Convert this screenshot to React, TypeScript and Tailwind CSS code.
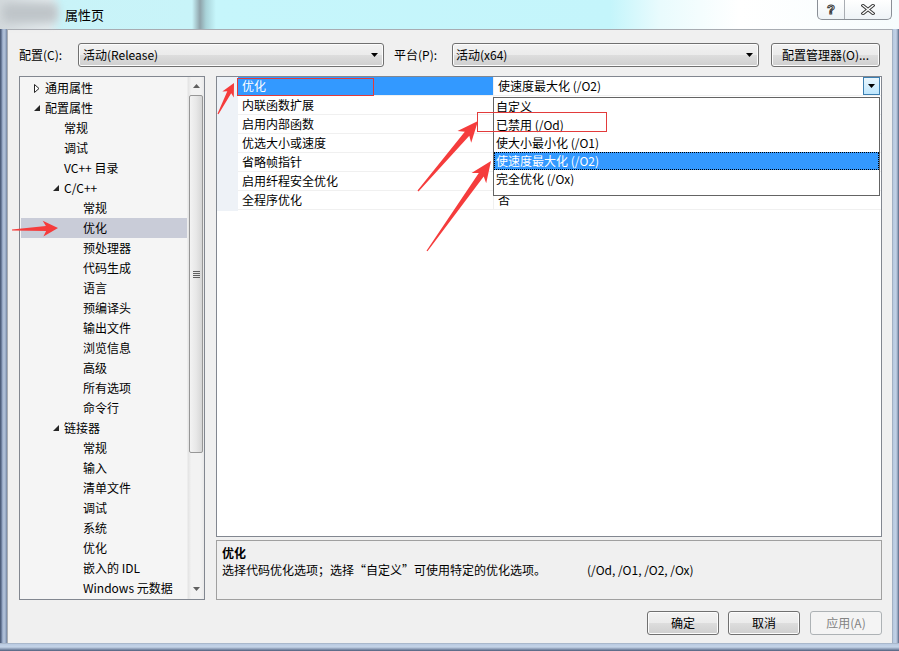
import React from "react";

type Node = { t: string; l: number; e?: "open" | "closed"; sel?: boolean };

const tree: Node[] = [
  { t: "通用属性", l: 0, e: "closed" },
  { t: "配置属性", l: 0, e: "open" },
  { t: "常规", l: 1 },
  { t: "调试", l: 1 },
  { t: "VC++ 目录", l: 1 },
  { t: "C/C++", l: 1, e: "open" },
  { t: "常规", l: 2 },
  { t: "优化", l: 2, sel: true },
  { t: "预处理器", l: 2 },
  { t: "代码生成", l: 2 },
  { t: "语言", l: 2 },
  { t: "预编译头", l: 2 },
  { t: "输出文件", l: 2 },
  { t: "浏览信息", l: 2 },
  { t: "高级", l: 2 },
  { t: "所有选项", l: 2 },
  { t: "命令行", l: 2 },
  { t: "链接器", l: 1, e: "open" },
  { t: "常规", l: 2 },
  { t: "输入", l: 2 },
  { t: "清单文件", l: 2 },
  { t: "调试", l: 2 },
  { t: "系统", l: 2 },
  { t: "优化", l: 2 },
  { t: "嵌入的 IDL", l: 2 },
  { t: "Windows 元数据", l: 2 },
];

const indent: Record<number, string> = { 0: "pl-[9px]", 1: "pl-[28px]", 2: "pl-[47px]" };

// values of rows 1-5 sit under the open list, so they are left empty
const props = [
  ["优化", "使速度最大化 (/O2)"],
  ["内联函数扩展", ""],
  ["启用内部函数", ""],
  ["优选大小或速度", ""],
  ["省略帧指针", ""],
  ["启用纤程安全优化", ""],
  ["全程序优化", "否"],
];

const options = ["自定义", "已禁用 (/Od)", "使大小最小化 (/O1)", "使速度最大化 (/O2)", "完全优化 (/Ox)"];

const winBtn =
  "h-[24px] rounded-[3px] border border-[#707070] bg-[linear-gradient(#f2f2f2_0%,#ebebeb_50%,#dddddd_51%,#cfcfcf_100%)] shadow-[inset_0_0_0_1px_#fcfcfc]";

function Caret() {
  return (
    <svg width="7" height="4" viewBox="0 0 7 4">
      <path d="M0 0h7L3.5 4z" fill="#000" />
    </svg>
  );
}

function Expander({ kind }: { kind?: "open" | "closed" }) {
  return (
    <div className="w-[16px] h-[20px] flex items-center justify-center">
      {kind === "closed" && (
        <svg width="6" height="9" viewBox="0 0 6 9">
          <path d="M0.5 0.5L5 4.5L0.5 8.5Z" fill="#fff" stroke="#262626" strokeWidth="1" />
        </svg>
      )}
      {kind === "open" && (
        <svg width="6" height="6" viewBox="0 0 6 6">
          <path d="M6 0V6H0Z" fill="#262626" />
        </svg>
      )}
    </div>
  );
}

function arrow(tx: number, ty: number, hx: number, hy: number, hl: number, hw: number, s0: number, s1: number) {
  const dx = hx - tx;
  const dy = hy - ty;
  const L = Math.hypot(dx, dy);
  const ux = dx / L;
  const uy = dy / L;
  const nx = -uy;
  const ny = ux;
  const bx = hx - ux * hl;
  const by = hy - uy * hl;
  const cx = hx - ux * hl * 0.8;
  const cy = hy - uy * hl * 0.8;
  const p = [
    [tx + nx * s0, ty + ny * s0],
    [cx + nx * s1, cy + ny * s1],
    [bx + nx * hw, by + ny * hw],
    [hx, hy],
    [bx - nx * hw, by - ny * hw],
    [cx - nx * s1, cy - ny * s1],
    [tx - nx * s0, ty - ny * s0],
  ];
  return p.map((q) => q[0].toFixed(1) + "," + q[1].toFixed(1)).join(" ");
}

function Tree() {
  return (
    <div className="w-[186px] h-full border border-[#828790] bg-[#f5f5f5] flex overflow-hidden">
      <div className="flex-1 pt-[1px] overflow-hidden">
        {tree.map((n, i) => (
          <div
            key={i}
            className={`h-[20px] flex items-center whitespace-nowrap ${indent[n.l]} ${n.sel ? "bg-[#c9ccd8] ml-[1px]" : ""}`}
          >
            <div className={n.sel ? "-ml-[1px]" : ""}>
              <Expander kind={n.e} />
            </div>
            <span className="leading-[20px]">{n.t}</span>
          </div>
        ))}
      </div>
      <div className="w-[17px] h-full bg-[linear-gradient(90deg,#e3e3e3,#f2f2f2_20%,#f2f2f2_80%,#e9e9e9)] flex flex-col items-center border-l border-[#ededed]">
        <div className="h-[18px] w-full flex items-center justify-center">
          <svg width="7" height="4" viewBox="0 0 7 4">
            <path d="M0 4h7L3.5 0z" fill="#606060" />
          </svg>
        </div>
        <div className="w-[14px] h-[358px] rounded-[2px] border border-[#979797] bg-[linear-gradient(90deg,#f3f3f3,#e8e8e8_50%,#d6d6d6)] flex items-center justify-center">
          <div className="flex flex-col gap-[1px]">
            <div className="w-[7px] h-[1px] bg-[#606060]" />
            <div className="w-[7px] h-[1px] bg-[#606060]" />
            <div className="w-[7px] h-[1px] bg-[#606060]" />
            <div className="w-[7px] h-[1px] bg-[#606060]" />
          </div>
        </div>
        <div className="flex-1" />
        <div className="h-[20px] w-full flex items-center justify-center">
          <svg width="7" height="4" viewBox="0 0 7 4">
            <path d="M0 0h7L3.5 4z" fill="#606060" />
          </svg>
        </div>
      </div>
    </div>
  );
}

function Grid() {
  return (
    <div className="relative w-[666px] h-[462px] border border-[#828790] bg-white flex">
      <div className="w-[21px] h-[134px] bg-[#eef2f7]" />
      <div className="flex-1">
        {props.map(([k, v], i) => (
          <div key={i} className="flex h-[19px] border-b border-[#f0f0f0]">
            <div
              className={`w-[255px] pl-[4px] leading-[18px] ${i === 0 ? "bg-[#3399ff] text-white" : ""}`}
            >
              {k}
            </div>
            <div className="w-[1px] bg-[#f0f0f0]" />
            <div className="flex-1 flex pl-[4px] leading-[18px]">
              <span className="flex-1">{v}</span>
              {i === 0 && (
                <div className="w-[17px] h-[18px] mr-[1px] border border-[#3c7fb1] bg-[linear-gradient(#eaf6fd,#bee6fd)] flex items-center justify-center">
                  <Caret />
                </div>
              )}
            </div>
          </div>
        ))}
      </div>
      <div className="absolute left-[276px] top-[20px] w-[387px] h-[99px] border border-[#646464] bg-white">
        {options.map((o, i) => (
          <div
            key={i}
            className={`h-[18px] pl-[2px] leading-[18px] whitespace-nowrap ${
              i === 3 ? "bg-[#3399ff] text-white outline-1 outline-dotted outline-[#000] -outline-offset-1" : ""
            }`}
          >
            {o}
          </div>
        ))}
      </div>
    </div>
  );
}

export default function App() {
  return (
    <div className="relative w-[899px] h-[651px] overflow-hidden bg-[#f0f0f0] text-[12px] text-black font-['Noto_Sans_CJK_SC',sans-serif]">
      <div className="h-[29px] flex items-start bg-[linear-gradient(90deg,#d4dadd_0px,#e4ebee_48px,#c9f3f8_62px,#c8f4f9_192px,#8fa3aa_200px,#a9d3d9_206px,#c6f6fb_216px,#c4f5fb_610px,#e9fbfd_660px,#ffffff_740px,#f6fcfd_899px)]">
        <div className="mt-[3px] ml-[2px] w-[56px] h-[20px] rounded-[6px] bg-[#bfc5c9] blur-[4px]" />
        <div className="ml-[7px] mt-[6px] text-[13px] leading-[18px]">属性页</div>
        <div className="ml-auto mr-[7px] flex h-[20px] border border-t-0 border-[#8a8f96] rounded-b-[5px] bg-[linear-gradient(#ffffff,#eef3f6)] overflow-hidden">
          <div className="w-[27px] flex items-center justify-center border-r border-[#a9adb3] text-[13px] font-bold text-white [-webkit-text-stroke:1px_#3a3a3a] font-['Liberation_Sans',sans-serif]">
            ?
          </div>
          <div className="w-[46px] flex items-center justify-center">
            <svg width="14" height="11" viewBox="0 0 14 11">
              <path d="M2 1.5L12 9.5M12 1.5L2 9.5" stroke="#3a3a3a" strokeWidth="3.4" strokeLinecap="square" />
              <path d="M2 1.5L12 9.5M12 1.5L2 9.5" stroke="#fff" strokeWidth="1.4" strokeLinecap="square" />
            </svg>
          </div>
        </div>
      </div>

      <div className="flex h-[614px]">
        <div className="w-[7px] bg-[linear-gradient(90deg,#4f5f7c_0px,#4f5f7c_1px,#8c9ebd_2px,#b5c5dc_4px,#93a5c1_6px,#6e7e99_7px)]" />
        <div className="flex-1 border-t border-l border-[#a8acb2] flex flex-col pl-[11px] pr-[10px]">
          <div className="mt-[13px] flex items-center h-[24px]">
            <div className="w-[59px]">配置(C):</div>
            <div className={`${winBtn} w-[306px] flex items-center pl-[4px] pr-[5px]`}>
              <span className="flex-1">活动(Release)</span>
              <Caret />
            </div>
            <div className="ml-[10px] w-[58px]">平台(P):</div>
            <div className={`${winBtn} w-[307px] flex items-center pl-[3px] pr-[5px]`}>
              <span className="flex-1">活动(x64)</span>
              <Caret />
            </div>
            <div className={`${winBtn} ml-[12px] w-[109px] flex items-center justify-center`}>配置管理器(O)...</div>
          </div>

          <div className="mt-[9px] h-[524px] flex gap-[11px]">
            <Tree />
            <div className="flex flex-col gap-[3px]">
              <Grid />
              <div className="w-[666px] h-[60px] border border-[#a0a0a0] bg-[#f0f0f0] pl-[5px] pt-[3px]">
                <div className="font-bold leading-[17px]">优化</div>
                <div className="flex leading-[17px]">
                  <span className="w-[365px]">选择代码优化选项；选择“自定义”可使用特定的优化选项。</span>
                  <span>(/Od, /O1, /O2, /Ox)</span>
                </div>
              </div>
            </div>
          </div>

          <div className="mt-[11px] flex justify-end gap-[8px]">
            <div className={`${winBtn} w-[72px] flex items-center justify-center`}>确定</div>
            <div className={`${winBtn} ml-[1px] w-[72px] flex items-center justify-center`}>取消</div>
            <div className="ml-[2px] w-[72px] h-[24px] rounded-[3px] border border-[#adb2b5] bg-[#f4f4f4] text-[#838383] flex items-center justify-center">
              应用(A)
            </div>
          </div>
        </div>
        <div className="w-[7px] bg-[linear-gradient(90deg,#8e99a8_0px,#b7c8df_1px,#c3d2e7_4px,#8797b2_6px,#4f5f7c_7px)]" />
      </div>
      <div className="h-[8px] bg-[linear-gradient(#9aa6b6_0px,#b9cae1_1px,#c5d4e8_4px,#8a9ab4_6px,#4f5f7c_8px)]" />

      <svg className="absolute left-0 top-0 pointer-events-none" width="899" height="651">
        <rect x="237.5" y="78.5" width="136" height="17" fill="none" stroke="#e23b3b" strokeWidth="1" />
        <rect x="477.5" y="112.5" width="129" height="19" fill="none" stroke="#e23b3b" strokeWidth="1" />
        <polygon points={arrow(12, 230, 58, 228, 15, 8, 0.6, 2.6)} fill="#f53c3c" />
        <polygon points={arrow(218, 114, 234, 83, 13, 6.5, 0.6, 2.2)} fill="#f53c3c" />
        <polygon points={arrow(418, 191, 478, 121, 21, 9, 0.6, 3)} fill="#f53c3c" />
        <polygon points={arrow(427, 251, 491, 161, 21, 9, 0.6, 3)} fill="#f53c3c" />
      </svg>
    </div>
  );
}
